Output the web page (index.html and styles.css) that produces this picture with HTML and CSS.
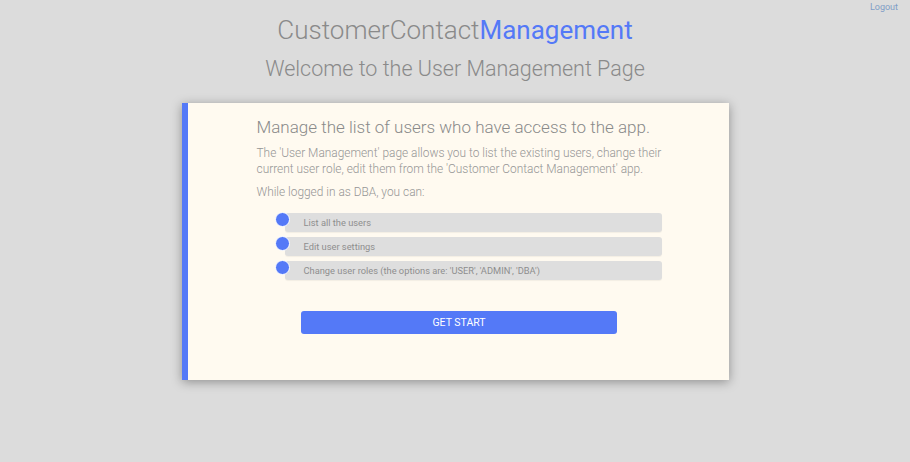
FILE: index.html
```html
<!DOCTYPE html>
<html>
<head>
<meta charset="utf-8">
<link rel="stylesheet" href="styles.css">
</head>
<body>
<div class="topbar"><a class="logout" href="#">Logout</a></div>
<header class="header">
  <h1 class="title">CustomerContact<span class="accent">Management</span></h1>
  <h2 class="subtitle">Welcome to the User Management Page</h2>
</header>
<main class="card">
  <div class="content">
    <h3 class="heading">Manage the list of users who have access to the app.</h3>
    <p class="text">The 'User Management' page allows you to list the existing users, change their current user role, edit them from the 'Customer Contact Management' app.</p>
    <p class="text">While logged in as DBA, you can:</p>
    <ul class="list">
      <li class="item"><span class="dot"></span><span class="bar">List all the users</span></li>
      <li class="item"><span class="dot"></span><span class="bar">Edit user settings</span></li>
      <li class="item"><span class="dot"></span><span class="bar">Change user roles (the options are: 'USER', 'ADMIN', 'DBA')</span></li>
    </ul>
    <div class="actions"><button class="btn">GET START</button></div>
  </div>
</main>
</body>
</html>
```
FILE: styles.css
```css
* { box-sizing: border-box; }
html, body { margin: 0; padding: 0; }
body {
  background: #dcdcdc;
  font-family: Roboto, "Noto Sans", sans-serif;
  font-weight: 300;
  color: #8a8a8a;
  height: 462px;
  overflow: hidden;
}
.topbar {
  height: 0;
  display: flex;
  justify-content: flex-end;
  padding-right: 12px;
}
.logout {
  font-size: 9px;
  font-weight: 400;
  color: #7f9cc6;
  text-decoration: none;
  margin-top: 1px;
  line-height: 12px;
}
.header {
  text-align: center;
  padding-top: 14px;
}
.title {
  margin: 0;
  font-size: 26px;
  font-weight: 300;
  line-height: 32px;
  color: #8a8a8a;
}
.accent { color: #5479f7; font-weight: 400; }
.subtitle {
  margin: 9px 0 0;
  font-size: 21.5px;
  font-weight: 300;
  line-height: 28px;
  color: #8a8a8a;
}
.card {
  width: 547px;
  height: 277px;
  margin: 20px auto 0;
  background: #fffaf0;
  border-left: 6px solid #5479f7;
  box-shadow: 0 2px 10px rgba(0,0,0,0.35);
  padding: 13px 67px 0 69px;
}
.heading {
  margin: 0;
  font-size: 17px;
  font-weight: 300;
  line-height: 22px;
  color: #8a8a8a;
}
.text {
  margin: 7px 0 0;
  font-size: 11.9px;
  line-height: 16px;
  color: #959595;
}
.text + .text { margin-top: 7px; }
.list {
  list-style: none;
  margin: 13px 0 0;
  padding: 0 0 0 18px;
  display: flex;
  flex-direction: column;
  gap: 4px;
}
.item {
  display: flex;
  align-items: flex-start;
  position: relative;
  height: 20px;
}
.dot {
  width: 15px;
  height: 15px;
  border-radius: 50%;
  background: #5479f7;
  border: 1px solid #fff;
  position: relative;
  z-index: 1;
  flex: none;
  margin-top: -1px;
}
.bar {
  flex: 1;
  margin-left: -5px;
  height: 19px;
  background: #dedede;
  border-radius: 3px;
  font-size: 9.3px;
  font-weight: 400;
  color: #8e8e8e;
  line-height: 19px;
  padding-left: 19px;
  box-shadow: 0 1px 1px rgba(0,0,0,0.05);
}
.actions {
  display: flex;
  justify-content: center;
  margin-top: 30px;
}
.btn {
  width: 316px;
  height: 23px;
  background: #5479f7;
  color: #fff;
  border: none;
  border-radius: 3px;
  font-family: Roboto, sans-serif;
  font-size: 10.5px;
  font-weight: 400;
  padding: 0;
}
```
